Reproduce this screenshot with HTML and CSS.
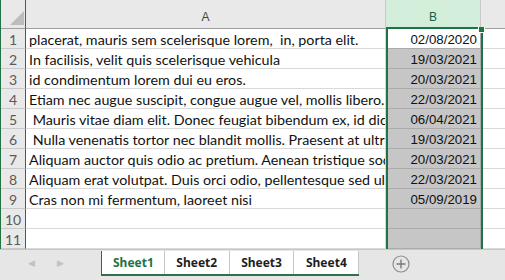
FILE: index.html
```html
<!DOCTYPE html>
<html>
<head>
<meta charset="utf-8">
<link rel="stylesheet" href="styles.css">
</head>
<body>
<div class="app">
  <div class="sheet">
    <div class="grid">
      <div class="corner"><svg class="tri" width="14" height="14" viewBox="0 0 14 14"><polygon points="14,0 14,14 0,14" fill="#bdbdbd"/></svg></div>
      <div class="colhead">A</div>
      <div class="colhead sel">B</div>
      <div class="colhead last"></div>

      <div class="rowhead">1</div><div class="cell a">placerat, mauris sem scelerisque lorem,&nbsp; in, porta elit.</div><div class="cell b first">02/08/2020</div><div class="cell c"></div>
      <div class="rowhead">2</div><div class="cell a">In facilisis, velit quis scelerisque vehicula</div><div class="cell b">19/03/2021</div><div class="cell c"></div>
      <div class="rowhead">3</div><div class="cell a">id condimentum lorem dui eu eros.</div><div class="cell b">20/03/2021</div><div class="cell c"></div>
      <div class="rowhead">4</div><div class="cell a">Etiam nec augue suscipit, congue augue vel, mollis libero.</div><div class="cell b">22/03/2021</div><div class="cell c"></div>
      <div class="rowhead">5</div><div class="cell a">&nbsp;Mauris vitae diam elit. Donec feugiat bibendum ex, id dict</div><div class="cell b">06/04/2021</div><div class="cell c"></div>
      <div class="rowhead">6</div><div class="cell a">&nbsp;Nulla venenatis tortor nec blandit mollis. Praesent at ultri</div><div class="cell b">19/03/2021</div><div class="cell c"></div>
      <div class="rowhead">7</div><div class="cell a">Aliquam auctor quis odio ac pretium. Aenean tristique sod</div><div class="cell b">20/03/2021</div><div class="cell c"></div>
      <div class="rowhead">8</div><div class="cell a">Aliquam erat volutpat. Duis orci odio, pellentesque sed ul</div><div class="cell b">22/03/2021</div><div class="cell c"></div>
      <div class="rowhead">9</div><div class="cell a">Cras non mi fermentum, laoreet nisi</div><div class="cell b">05/09/2019</div><div class="cell c"></div>
      <div class="rowhead">10</div><div class="cell a"></div><div class="cell b"></div><div class="cell c"></div>
      <div class="rowhead">11</div><div class="cell a"></div><div class="cell b"></div><div class="cell c"></div>
    </div>
    <div class="selection"><span class="handle"></span></div>
  </div>
  <div class="tabbar">
    <div class="navs">
      <span class="nav">&#9664;</span>
      <span class="nav">&#9654;</span>
    </div>
    <div class="tabs">
      <div class="tab active">Sheet1</div>
      <div class="tab">Sheet2</div>
      <div class="tab">Sheet3</div>
      <div class="tab">Sheet4</div>
    </div>
    <div class="add">
      <svg width="18" height="18" viewBox="0 0 18 18"><circle cx="9" cy="9" r="8" fill="none" stroke="#8c8c8c" stroke-width="1.2"/><path d="M9 4.5v9M4.5 9h9" stroke="#7a7a7a" stroke-width="1.4"/></svg>
    </div>
  </div>
</div>
</body>
</html>
```
FILE: styles.css
```css
html, body {
  margin: 0;
  padding: 0;
  background: #ffffff;
}
.app {
  width: 505px;
  height: 280px;
  overflow: hidden;
  display: flex;
  flex-direction: column;
  font-family: "Liberation Sans", Arial, sans-serif;
}
.sheet {
  position: relative;
  height: 249px;
  overflow: hidden;
  border-left: 1px solid #217346;
}
.grid {
  display: grid;
  grid-template-columns: 25px 360px 95px 30px;
  grid-template-rows: 29px repeat(11, 20px);
}
.corner {
  background: #e9e9e9;
  border-right: 1px solid #217346;
  border-bottom: 1px solid #9f9f9f;
  display: flex;
  align-items: flex-end;
  justify-content: flex-end;
  padding: 0 1px 3px 0;
  box-sizing: border-box;
}
.colhead {
  background: #e9e9e9;
  border-right: 1px solid #c9c9c9;
  border-bottom: 1px solid #9f9f9f;
  box-sizing: border-box;
  display: flex;
  align-items: flex-end;
  justify-content: center;
  padding-bottom: 4px;
  font-family: "Liberation Sans", Arial, sans-serif;
  font-size: 12px;
  color: #444444;
}
.colhead.sel {
  background: #d3efdc;
  border-bottom: 2px solid #217346;
  padding-bottom: 3px;
  color: #1d5d3a;
}
.colhead.last {
  border-right: none;
}
.rowhead {
  background: #e9e9e9;
  border-right: 1px solid #217346;
  border-bottom: 1px solid #c9c9c9;
  box-sizing: border-box;
  display: flex;
  align-items: center;
  justify-content: center;
  font-family: "Lato", "Liberation Sans", sans-serif;
  font-size: 14px;
  color: #5a5a5a;
  padding-top: 1px;
}
.cell {
  border-right: 1px solid #d9d9d9;
  border-bottom: 1px solid #d9d9d9;
  box-sizing: border-box;
  font-family: "Lato", "Liberation Sans", sans-serif;
  font-size: 14.3px;
  line-height: 19px;
  color: #111111;
  white-space: nowrap;
  overflow: hidden;
  padding: 1px 0 0 3px;
}
.cell.b {
  background: #c6c6c6;
  text-align: right;
  font-family: "Liberation Sans", Arial, sans-serif;
  font-size: 13.3px;
  padding: 1px 3px 0 0;
  border-bottom-color: #ababab;
  border-right-color: #ababab;
}
.cell.b.first {
  background: #ffffff;
}
.cell.c {
  border-right: none;
}
.selection {
  position: absolute;
  left: 385px;
  top: 27px;
  width: 97px;
  height: 240px;
  border: 2px solid #217346;
  box-sizing: border-box;
}
.handle {
  position: absolute;
  right: -4px;
  top: -2px;
  width: 5px;
  height: 5px;
  background: #217346;
  border: 1px solid #ffffff;
  border-top: none;
}
.tabbar {
  flex: 1;
  background: #e6e6e6;
  border-top: 1px solid #c6c6c6;
  display: flex;
  align-items: flex-start;
}
.navs {
  width: 101px;
  display: flex;
  gap: 22px;
  padding: 8px 0 0 28px;
  box-sizing: border-box;
  color: #c2c2c2;
  font-size: 9px;
}
.tabs {
  display: flex;
  background: #ffffff;
  border-bottom: 2px solid #2f6f4a;
  height: 23px;
  margin-top: 1px;
}
.tab {
  border-right: 1px solid #c6c6c6;
  padding: 0 11.5px;
  display: flex;
  align-items: center;
  font-family: "Noto Sans", "Open Sans", sans-serif;
  font-weight: bold;
  font-size: 12px;
  color: #1e1e1e;
}
.tab.active {
  color: #217346;
  border-left: 1px solid #217346;
  padding: 0 10px 0 11px;
}
.add {
  margin-left: 33px;
  padding-top: 5px;
}
```
